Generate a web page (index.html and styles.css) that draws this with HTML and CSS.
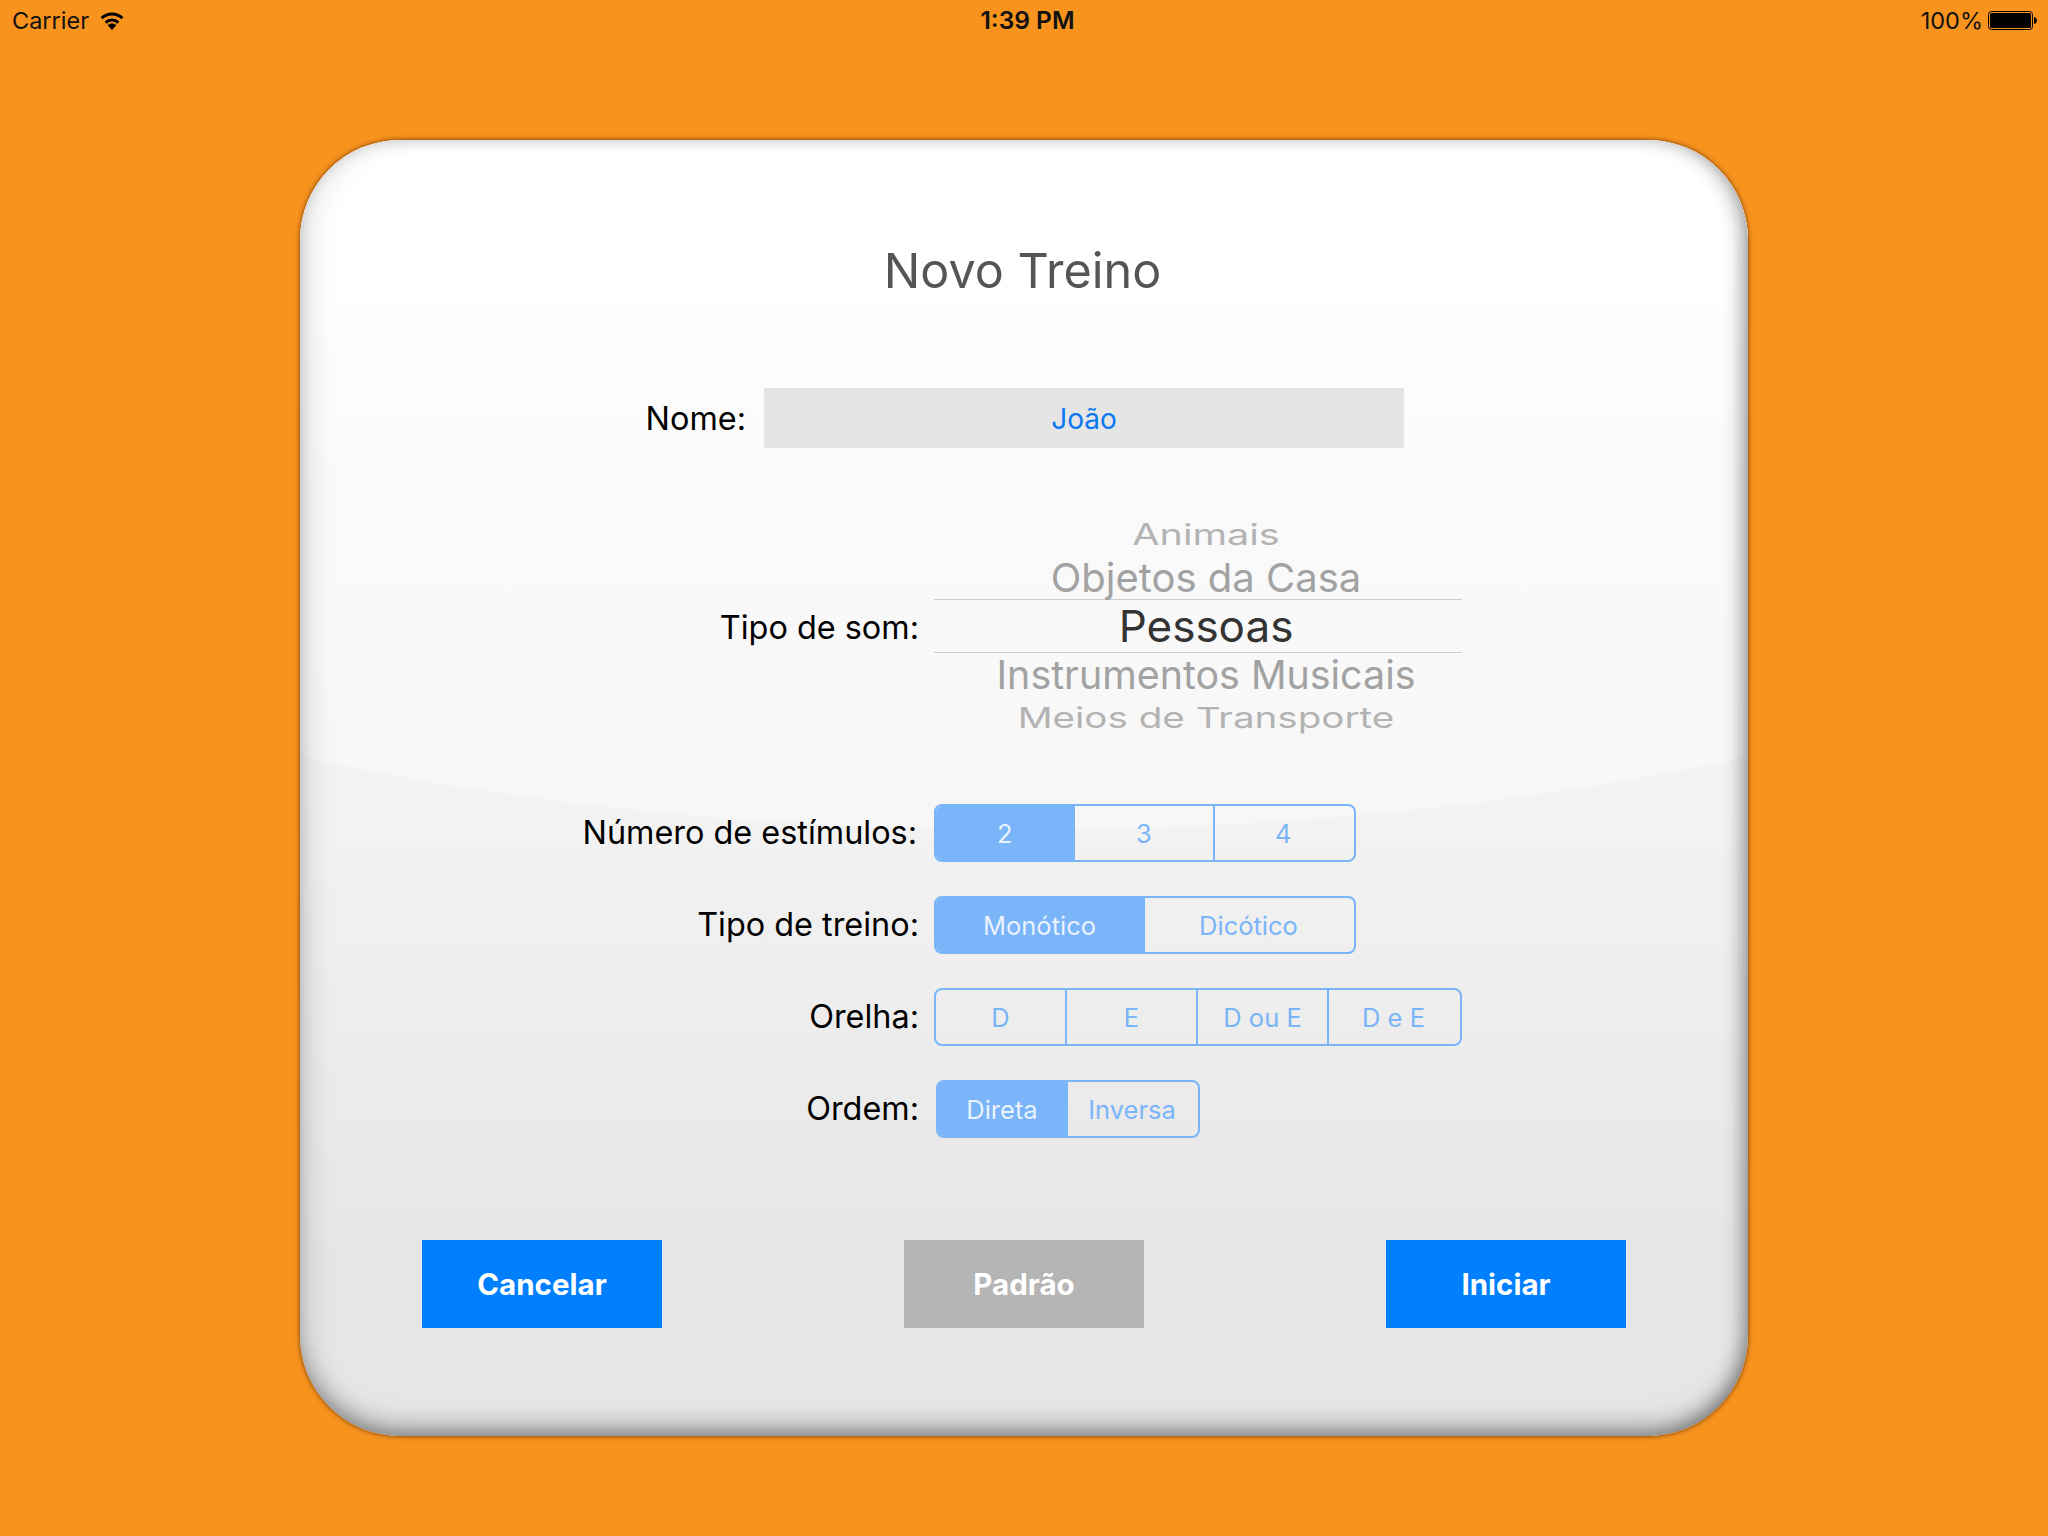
FILE: index.html
```html
<!DOCTYPE html>
<html lang="pt-BR">
<head>
  <meta charset="UTF-8">
  <title>Novo Treino</title>
  <link rel="stylesheet" href="styles.css">
</head>
<body>
<div class="statusbar">
  <div class="status-left">
    <span>Carrier</span>
    <svg class="wifi" width="26" height="19" viewBox="0 0 26 19">
      <path d="M13 19 L8.6 14.2 C11.2 12 14.8 12 17.4 14.2 Z" fill="#000"/>
      <path d="M6.6 11.6 C10.2 8.2 15.8 8.2 19.4 11.6" fill="none" stroke="#000" stroke-width="3"/>
      <path d="M2.6 7.2 C8.4 1.6 17.6 1.6 23.4 7.2" fill="none" stroke="#000" stroke-width="3"/>
    </svg>
  </div>
  <div class="status-time">1:39 PM</div>
  <div class="status-right">
    <span>100%</span>
    <svg class="battery" width="49" height="19" viewBox="0 0 49 19">
      <rect x="0.5" y="0.5" width="44" height="18" rx="3" fill="none" stroke="#000" stroke-width="1"/>
      <rect x="2" y="2" width="41" height="15" rx="1.5" fill="#000"/>
      <path d="M46 6 C48 6.5 49 8 49 9.500 C49 11 48 12.500 46 13 Z" fill="#000"/>
    </svg>
  </div>
</div>

<div class="card">
  <h1 class="title">Novo Treino</h1>

  <div class="row row-nome">
    <label class="label">Nome:</label>
    <div class="field">João</div>
  </div>

  <div class="row row-picker">
    <label class="label">Tipo de som:</label>
    <div class="picker">
      <div class="item item-far-top"><span>Animais</span></div>
      <div class="item item-near-top"><span>Objetos da Casa</span></div>
      <div class="item item-selected"><span>Pessoas</span></div>
      <div class="item item-near-bottom"><span>Instrumentos Musicais</span></div>
      <div class="item item-far-bottom"><span>Meios de Transporte</span></div>
    </div>
  </div>

  <div class="row row-estimulos">
    <label class="label">Número de estímulos:</label>
    <div class="seg seg-md">
      <div class="on">2</div>
      <div>3</div>
      <div>4</div>
    </div>
  </div>

  <div class="row">
    <label class="label">Tipo de treino:</label>
    <div class="seg seg-md">
      <div class="on">Monótico</div>
      <div>Dicótico</div>
    </div>
  </div>

  <div class="row">
    <label class="label">Orelha:</label>
    <div class="seg seg-lg">
      <div>D</div>
      <div>E</div>
      <div>D ou E</div>
      <div>D e E</div>
    </div>
  </div>

  <div class="row row-ordem">
    <label class="label">Ordem:</label>
    <div class="seg seg-sm">
      <div class="on">Direta</div>
      <div>Inversa</div>
    </div>
  </div>

  <div class="buttons">
    <button class="btn">Cancelar</button>
    <button class="btn btn-gray">Padrão</button>
    <button class="btn">Iniciar</button>
  </div>
</div>
</body>
</html>
```

FILE: styles.css
```css
* {
    box-sizing: border-box;
    font-family: Inter, "Liberation Sans", sans-serif;
}
body {
    margin: 0;
    width: 2048px;
    height: 1536px;
    background-color: #f8931e;
    overflow: hidden;
}

/* status bar */
.statusbar {
    display: grid;
    grid-template-columns: 1fr auto 1fr;
    align-items: center;
    height: 40px;
    padding: 0 11px 0 12px;
    font-size: 23.5px;
    color: #111;
}
.status-left {
    display: flex;
    align-items: center;
    gap: 10px;
}
.status-time {
    font-size: 24.5px;
    font-weight: 600;
    padding-left: 6px;
}
.status-right {
    display: flex;
    align-items: center;
    justify-content: flex-end;
    gap: 5px;
}

/* card */
.card {
    position: relative;
    width: 1448px;
    height: 1296px;
    margin: 100px 0 0 300px;
    padding-top: 100px;
    border-radius: 100px;
    background: linear-gradient(#f3f3f3 660px, #e6e6e6 1130px);
    box-shadow: 0 0 5px rgba(70, 35, 0, .85);
    overflow: hidden;
}
/* glossy top */
.card:before {
    content: "";
    position: absolute;
    left: -676px;
    top: -330px;
    width: 2800px;
    height: 1020px;
    border-radius: 50%;
    background: linear-gradient(#fff 450px, #fafafa 680px, #f7f7f7 1020px);
}
/* edge shading */
.card:after {
    content: "";
    position: absolute;
    inset: 0;
    border-radius: inherit;
    box-shadow:
        inset 0 -14px 20px -6px rgba(0, 0, 0, .3),
        inset 0 -28px 34px -14px rgba(0, 0, 0, .08),
        inset -14px 0 20px -8px rgba(0, 0, 0, .3),
        inset 22px 0 30px -12px rgba(0, 0, 0, .1),
        inset 0 10px 14px -7px rgba(0, 0, 0, .08);
    pointer-events: none;
}
.card > * {
    position: relative;
    z-index: 1;
}
.title {
    margin: 0;
    padding-right: 3px;
    text-align: center;
    font-size: 48.5px;
    font-weight: 400;
    line-height: 62px;
    color: #555;
}

/* rows */
.row {
    display: flex;
    align-items: center;
    height: 58px;
    margin-top: 34px;
}
.label {
    flex: none;
    width: 619px;
    padding-bottom: 2px;
    text-align: right;
    font-size: 32.4px;
    color: #000;
}
.row-nome {
    height: 60px;
    margin-top: 86px;
}
.row-nome .label {
    width: 446px;
    padding-bottom: 0;
}
.field {
    width: 640px;
    height: 60px;
    margin-left: 18px;
    background-color: #e5e5e5;
    color: #0a78f0;
    font-size: 28px;
    line-height: 62px;
    text-align: center;
}
.row-picker {
    height: 230px;
    margin-top: 64px;
    margin-bottom: 62px;
}
.row-picker .label {
    padding-bottom: 0;
}
.row-estimulos {
    margin-top: 0;
}
.row-estimulos .label {
    padding-right: 2px;
}

/* picker */
.picker {
    width: 528px;
    margin-left: 15px;
    padding-bottom: 5px;
    text-align: center;
}
.item {
    padding-left: 16px;
    white-space: nowrap;
}
.item span {
    display: inline-block;
}
.item-far-top {
    height: 44px;
    font-size: 39.5px;
    line-height: 46px;
    color: #b3b3b3;
}
.item-far-top span {
    transform: scaleY(.74);
}
.item-near-top {
    height: 43px;
    font-size: 40px;
    line-height: 44px;
    color: #a2a2a2;
}
.item-selected {
    height: 54px;
    border-top: 1px solid #cbcbcb;
    border-bottom: 1px solid #cbcbcb;
    font-size: 44px;
    line-height: 52px;
    color: #333;
}
.item-near-bottom {
    height: 44px;
    font-size: 39.4px;
    line-height: 44px;
    color: #a2a2a2;
}
.item-far-bottom {
    height: 40px;
    font-size: 38.6px;
    line-height: 42px;
    color: #b3b3b3;
}
.item-far-bottom span {
    transform: scaleY(.74);
}

/* segmented controls */
.seg {
    display: flex;
    height: 58px;
    margin-left: 15px;
    border: 2px solid #7ab4f9;
    border-radius: 8px;
    overflow: hidden;
}
.seg-md { width: 422px; }
.seg-lg { width: 528px; }
.seg-sm { width: 264px; }
.seg div {
    flex: 1;
    display: flex;
    align-items: center;
    justify-content: center;
    font-size: 25.5px;
    color: #7ab4f9;
    border-right: 2px solid #7ab4f9;
}
.seg div:last-child {
    border-right-color: transparent;
}
.seg .on {
    background-color: #7ab4f9;
    color: rgba(255, 255, 255, .85);
}
.row-ordem .seg {
    margin-left: 17px;
}

/* bottom buttons */
.buttons {
    display: flex;
    justify-content: space-between;
    margin-top: 102px;
    padding: 0 122px;
}
.btn {
    width: 240px;
    height: 88px;
    border: 0;
    background-color: #0080ff;
    color: #fff;
    font-size: 29.5px;
    font-weight: 700;
}
.btn-gray {
    background-color: #b5b5b5;
}
```
